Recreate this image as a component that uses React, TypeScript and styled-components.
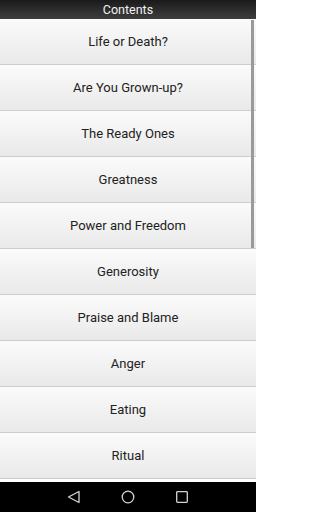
import React from "react";
import styled, { createGlobalStyle } from "styled-components";

const GlobalStyle = createGlobalStyle`
	html, body {
		margin: 0;
		padding: 0;
		background: #ffffff;
	}
	* {
		box-sizing: border-box;
	}
`;

const Screen = styled.div`
	width: 256px;
	height: 512px;
	display: flex;
	flex-direction: column;
	font-family: Roboto, "Liberation Sans", sans-serif;
	background: #ffffff;
	overflow: hidden;
`;

const Header = styled.header`
	height: 19px;
	flex: none;
	display: flex;
	align-items: center;
	justify-content: center;
	background: linear-gradient(#1a1a1a, #3e3e3e);
	color: #f2f2f2;
	font-size: 12.5px;
	font-weight: 400;
`;

const List = styled.ul`
	position: relative;
	flex: 1;
	margin: 0;
	padding: 0 0 3px;
	list-style: none;
`;

const Row = styled.li`
	height: 46px;
	display: flex;
	align-items: center;
	justify-content: center;
	background: linear-gradient(#fbfbfb, #e9e9e9);
	border-bottom: 1px solid #cdcdcd;
	color: #222222;
	font-size: 13px;
`;

const Scrollbar = styled.div`
	position: absolute;
	top: 1px;
	right: 2px;
	width: 3px;
	height: 228px;
	background: #9a9a9a;
`;

const NavBar = styled.nav`
	height: 30px;
	flex: none;
	display: grid;
	grid-template-columns: repeat(3, 54px);
	justify-content: center;
	align-items: center;
	justify-items: center;
	background: #000000;
`;

const chapters = [
	"Life or Death?",
	"Are You Grown-up?",
	"The Ready Ones",
	"Greatness",
	"Power and Freedom",
	"Generosity",
	"Praise and Blame",
	"Anger",
	"Eating",
	"Ritual",
];

function NavIcon({ kind }: { kind: "back" | "home" | "recent" }) {
	return (
		<svg width="16" height="16" viewBox="0 0 16 16" fill="none" stroke="#d4d4d4" strokeWidth="1.3">
			{kind === "back" && <path d="M13 2.5 L2.5 8 L13 13.5 Z" strokeLinejoin="round" />}
			{kind === "home" && <circle cx="8" cy="8" r="5.8" />}
			{kind === "recent" && <rect x="2.7" y="2.7" width="10.6" height="10.6" rx="0.8" />}
		</svg>
	);
}

export default function App() {
	return (
		<>
			<GlobalStyle />
			<Screen>
				<Header>Contents</Header>
				<List>
					{chapters.map((title) => (
						<Row key={title}>{title}</Row>
					))}
					<Scrollbar />
				</List>
				<NavBar>
					<NavIcon kind="back" />
					<NavIcon kind="home" />
					<NavIcon kind="recent" />
				</NavBar>
			</Screen>
		</>
	);
}
